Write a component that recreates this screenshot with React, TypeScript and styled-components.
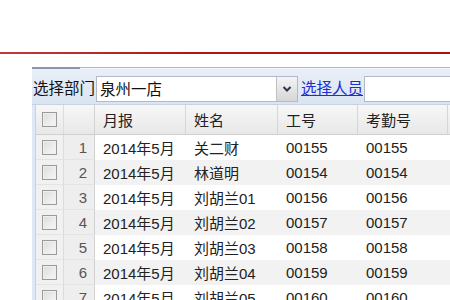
import styled, { createGlobalStyle } from "styled-components";

const GlobalStyle = createGlobalStyle`
  body {
    margin: 0;
    background: #ffffff;
    font-family: "Liberation Sans", Arial, "Noto Sans CJK SC", sans-serif;
  }
`;

const rows = [
  { name: "关二财", no: "00155" },
  { name: "林道明", no: "00154" },
  { name: "刘胡兰01", no: "00156" },
  { name: "刘胡兰02", no: "00157" },
  { name: "刘胡兰03", no: "00158" },
  { name: "刘胡兰04", no: "00159" },
  { name: "刘胡兰05", no: "00160" },
];

export default function App() {
  return (
    <>
      <GlobalStyle />
      <Page>
        <RedRule />
        <Panel>
          <PanelTop>
            <TopTab />
          </PanelTop>
          <Toolbar>
            <Label>选择部门</Label>
            <Combo>
              <ComboText>泉州一店</ComboText>
              <Trigger>
                <svg width="10" height="8" viewBox="0 0 10 8">
                  <path
                    d="M1.5 2 L5 5.5 L8.5 2"
                    fill="none"
                    stroke="#2a3550"
                    strokeWidth="2"
                  />
                </svg>
              </Trigger>
            </Combo>
            <PickLink href="#">选择人员</PickLink>
            <TextBox />
          </Toolbar>
          <Grid>
            <HeadRow>
              <CheckCell $head>
                <Check />
              </CheckCell>
              <NumCell $head />
              <HeadCell>月报</HeadCell>
              <HeadCell>姓名</HeadCell>
              <HeadCell>工号</HeadCell>
              <HeadCell>考勤号</HeadCell>
              <HeadCell />
            </HeadRow>
            {rows.map((r, i) => (
              <DataRow key={r.no} $alt={i % 2 === 1}>
                <CheckCell>
                  <Check />
                </CheckCell>
                <NumCell>{i + 1}</NumCell>
                <Cell>2014年5月</Cell>
                <Cell>{r.name}</Cell>
                <Cell>{r.no}</Cell>
                <Cell>{r.no}</Cell>
                <Cell />
              </DataRow>
            ))}
          </Grid>
        </Panel>
      </Page>
    </>
  );
}

const cols = "28px 31px 91px 92px 80px 90px 60px";

const Page = styled.div`
  width: 450px;
  height: 300px;
  overflow: hidden;
  padding-top: 52px;
  box-sizing: border-box;
`;

const RedRule = styled.div`
  height: 2px;
  background: linear-gradient(to right, #c43a3a, #b01818 40%, #a81212);
`;

const Panel = styled.div`
  margin: 13px 0 0 32px;
  width: 440px;
  background: #dfe8f6;
`;

const PanelTop = styled.div`
  height: 1px;
  border-top: 1px solid #b0b8c4;
  background: #f4f6fa;
  position: relative;
`;

const TopTab = styled.div`
  position: absolute;
  left: 0;
  top: -1px;
  width: 48px;
  height: 2px;
  background: #8b98aa;
`;

const Toolbar = styled.div`
  display: flex;
  align-items: flex-start;
  height: 36px;
  padding: 7px 0 0 1px;
  box-sizing: border-box;
  background: linear-gradient(#e9eff8, #dae4f2);
  border-bottom: 1px solid #c8d3e2;
`;

const Label = styled.span`
  font-size: 15.5px;
  line-height: 26px;
  color: #111;
  width: 63px;
  white-space: nowrap;
`;

const Combo = styled.div`
  display: flex;
  width: 202px;
  height: 26px;
  box-sizing: border-box;
  border: 1px solid #b5b8c8;
  background: #fff;
`;

const ComboText = styled.div`
  flex: 1;
  font-size: 15.5px;
  line-height: 26px;
  padding-left: 3px;
  color: #111;
`;

const Trigger = styled.div`
  width: 20px;
  display: flex;
  align-items: center;
  justify-content: center;
  background: linear-gradient(#f4f4f4, #d6d6d6);
  border-left: 1px solid #c0c0c0;
`;

const PickLink = styled.a`
  font-size: 15.5px;
  line-height: 26px;
  color: #1c2fd0;
  text-decoration: underline;
  margin: 0 1px 0 3px;
  white-space: nowrap;
`;

const TextBox = styled.div`
  flex: 1;
  height: 26px;
  box-sizing: border-box;
  border: 1px solid #b5b8c8;
  background: #fff;
`;

const Grid = styled.div`
  margin-left: 3px;
  background: #fff;
  border-left: 1px solid #c6d2e2;
`;

const HeadRow = styled.div`
  display: grid;
  grid-template-columns: ${cols};
  height: 30px;
  background: linear-gradient(#f7f7f7, #e8e8e8);
  border-bottom: 1px solid #d0d0d0;
  box-sizing: border-box;
`;

const DataRow = styled.div<{ $alt?: boolean }>`
  display: grid;
  grid-template-columns: ${cols};
  height: 25px;
  background: ${(p) => (p.$alt ? "#f2f2f2" : "#ffffff")};
`;

const HeadCell = styled.div`
  display: flex;
  align-items: center;
  padding-left: 8px;
  font-size: 15px;
  color: #222;
  border-right: 1px solid #d6d6d6;
`;

const Cell = styled.div`
  display: flex;
  align-items: center;
  padding-left: 8px;
  font-size: 15px;
  color: #222;
  white-space: nowrap;
`;

const CheckCell = styled.div<{ $head?: boolean }>`
  display: flex;
  align-items: center;
  justify-content: center;
  background: ${(p) => (p.$head ? "transparent" : "#f1f1f1")};
  border-right: 1px solid #dcdcdc;
  border-bottom: ${(p) => (p.$head ? "none" : "1px solid #e4e4e4")};
`;

const NumCell = styled.div<{ $head?: boolean }>`
  display: flex;
  align-items: center;
  justify-content: flex-end;
  padding-right: 7px;
  font-size: 15px;
  color: #555;
  background: ${(p) => (p.$head ? "transparent" : "#eeeeee")};
  border-right: 1px solid #d2d2d2;
  border-bottom: ${(p) => (p.$head ? "none" : "1px solid #e4e4e4")};
`;

const Check = styled.span`
  width: 13px;
  height: 13px;
  border: 1px solid #9a9a9a;
  background: linear-gradient(135deg, #dcdcdc, #f8f8f8);
  box-shadow: inset 0 0 0 1px #f0f0f0;
`;
